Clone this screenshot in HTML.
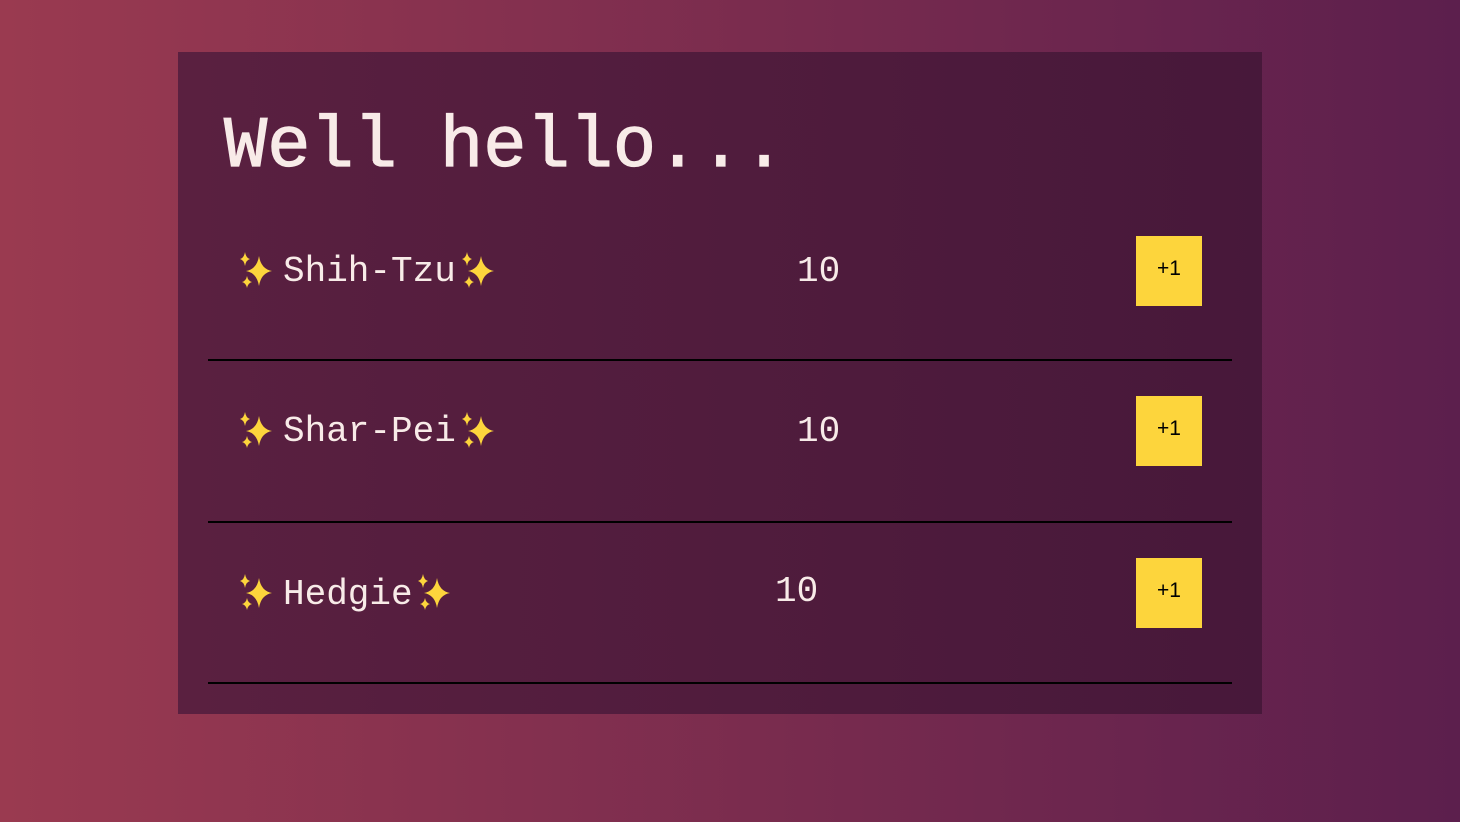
<!DOCTYPE html>
<html><head><meta charset="utf-8"><style>
html,body{margin:0;padding:0;width:1460px;height:822px;overflow:hidden;}
body{background:linear-gradient(to right,#9a3a50,#5c1f4d);font-family:"Liberation Mono",monospace;position:relative;}
.card{position:absolute;left:178px;top:52px;width:1084px;height:662px;background:linear-gradient(to right,#5a2040,#47183a);}
h1{position:absolute;left:224px;top:102px;margin:0;font-size:72px;line-height:90px;color:#f8ebe8;font-weight:normal;-webkit-text-stroke:1.2px #f8ebe8;}
.line{position:absolute;left:208px;width:1024px;height:2px;background:#000;}
.name,.num{position:absolute;color:#f8ebe8;font-size:36px;line-height:40px;}
.btn{position:absolute;left:1136px;width:66px;height:70px;background:#fdd53c;color:#000;font-family:"Liberation Sans",sans-serif;font-size:21px;display:flex;align-items:center;justify-content:center;}
.btn span{position:relative;top:-2px;}
svg{position:absolute;}
</style></head><body>
<div class="card"></div>
<h1>Well hello...</h1>

<svg width="0" height="0"><defs>
<g id="sp">
<path d="M21 4 Q23 17 34 19 Q23 21 21 34 Q19 21 8 19 Q19 17 21 4Z" fill="#fdd53c"/>
<path d="M7 0 Q8 6 12 7 Q8 8 7 14 Q6 8 2 7 Q6 6 7 0Z" fill="#fdd53c"/>
<path d="M9 24 Q10 29 14 30 Q10 31 9 36 Q8 31 4 30 Q8 29 9 24Z" fill="#fdd53c"/>
</g></defs></svg>

<svg style="left:238px;top:252px" width="38" height="38"><use href="#sp"/></svg>
<div class="name" style="left:283px;top:252px">Shih-Tzu</div>
<svg style="left:460px;top:252px" width="38" height="38"><use href="#sp"/></svg>
<div class="num" style="left:797px;top:252px">10</div>
<div class="btn" style="top:236px"><span>+1</span></div>
<div class="line" style="top:359px"></div>

<svg style="left:238px;top:412px" width="38" height="38"><use href="#sp"/></svg>
<div class="name" style="left:283px;top:412px">Shar-Pei</div>
<svg style="left:460px;top:412px" width="38" height="38"><use href="#sp"/></svg>
<div class="num" style="left:797px;top:412px">10</div>
<div class="btn" style="top:396px"><span>+1</span></div>
<div class="line" style="top:521px"></div>

<svg style="left:238px;top:574px" width="38" height="38"><use href="#sp"/></svg>
<div class="name" style="left:283px;top:575px">Hedgie</div>
<svg style="left:416px;top:574px" width="38" height="38"><use href="#sp"/></svg>
<div class="num" style="left:775px;top:572px">10</div>
<div class="btn" style="top:558px"><span>+1</span></div>
<div class="line" style="top:682px"></div>
</body></html>
